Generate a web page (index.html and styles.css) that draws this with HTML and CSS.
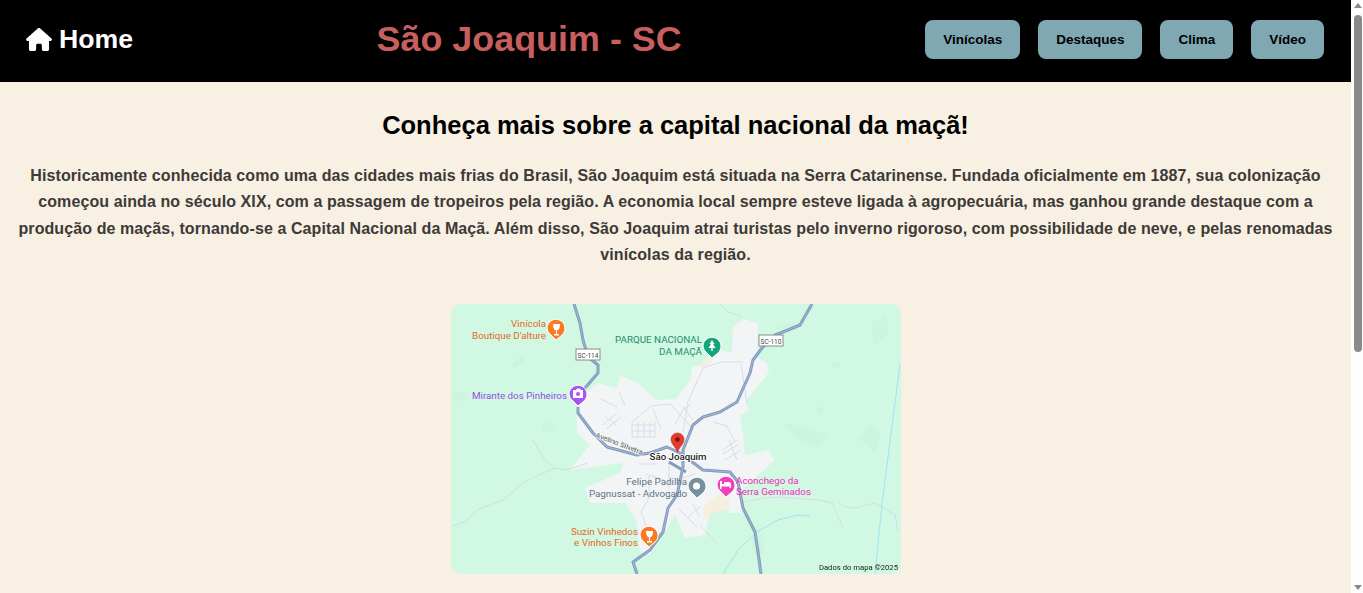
FILE: index.html
```html
<!DOCTYPE html>
<html lang="pt-BR">
<head>
<meta charset="utf-8">
<title>São Joaquim - SC</title>
<link rel="stylesheet" href="styles.css">
</head>
<body>
<div class="page">
<header class="topbar">
  <a class="home" href="#">
    <svg class="home-icon" viewBox="0 0 576 512" aria-hidden="true"><path d="M575.8 255.5c0 18-15 32.1-32 32.1h-32l.7 160.2c0 2.7-.2 5.4-.5 8.1V472c0 22.1-17.9 40-40 40H456c-1.100 0-2.200 0-3.300-.1-1.400.1-2.800.1-4.200.1H416 392c-22.100 0-40-17.900-40-40V448 384c0-17.700-14.300-32-32-32H256c-17.700 0-32 14.300-32 32v64 24c0 22.100-17.900 40-40 40H160 128.100c-1.500 0-3-.1-4.500-.2-1.200.1-2.400.2-3.600.2H104c-22.100 0-40-17.900-40-40V360c0-.9 0-1.900.1-2.800V287.600H32c-18 0-32-14-32-32.100 0-9 3-17 10-24L266.400 8c7-7 15-8 22-8s15 2 21 7L564.800 231.500c8 7 12 15 11 24z"/></svg>
    <span>Home</span>
  </a>
  <h1 class="title">São Joaquim - SC</h1>
  <nav class="nav">
    <a class="nav-btn" href="#">Vinícolas</a>
    <a class="nav-btn" href="#">Destaques</a>
    <a class="nav-btn" href="#">Clima</a>
    <a class="nav-btn" href="#">Vídeo</a>
  </nav>
</header>
<main class="content">
  <h2 class="heading">Conheça mais sobre a capital nacional da maçã!</h2>
  <p class="intro">Historicamente conhecida como uma das cidades mais frias do Brasil, São Joaquim está situada na Serra Catarinense. Fundada oficialmente em 1887, sua colonização começou ainda no século XIX, com a passagem de tropeiros pela região. A economia local sempre esteve ligada à agropecuária, mas ganhou grande destaque com a produção de maçãs, tornando-se a Capital Nacional da Maçã. Além disso, São Joaquim atrai turistas pelo inverno rigoroso, com possibilidade de neve, e pelas renomadas vinícolas da região.</p>
  <svg class="map" viewBox="0 0 450 270" role="img" aria-label="Mapa de São Joaquim">
    <rect class="m-land" width="450" height="270"/>
    <path class="m-tone" d="M0 90l12-3 4 8-14 3zM60 60l10-8 4 4-10 8zM90 122l8-6 6 6-6 6-8-2zM325 20l18 0 1 4-19 1zM420 20l15-10 3 20-15 12zM390 62l-8 2-2-6 10 0zM370 112l-6-6 6-4 4 4zM330 118l35 8 12 6-10 12-22-10zM420 120l-12 15 16 14 6-20zM300 240l6-20 8 20-6 20z"/>
    <path class="m-urban" d="M126 109L132 92L147 79L166 84L169 72L186 78L205 96L225 95L240 75L241 63L251 61L269 46L281 49L282 23L292 15L307 19L306 53L316 59L318 68L296 96L297 108L289 111L292 131L294 151L317 146L324 156L287 189L292 209L279 209L268 190L256 219L254 231L234 234L224 211L212 231L199 251L189 248L186 218L174 199L139 199L134 184L169 169L172 159L119 166L139 141L126 129Z"/>
    <path class="m-sand" d="M252 202L267 191L278 186L279 205L262 209L254 216Z"/>
    <path class="m-sand" d="M249 61L258 52L261 58L253 64Z"/>
    <g class="m-street">
      <path d="M151 121l15-12M155 125l15-12M159 117l-5-5M165 121l-5-5M181 118v16M187 118v16M193 118v16M199 118v16M204 118v16M181 121h23M181 127h23M181 133h23M181 118l19-16 19-2 17 18 6 8M202 105l8 20M240 100l-8 6-8 14M232 103l10 13M272 146l14-10M272 150l16-10M274 156l16-10M278 136l8 20M236 100L252 64L270 58L292 58M290 60L296 100M237 100L232 128M198 172v22l-8 14 8 22M228 205l18 18M236 214l14-12M242 200l6 12M218 155v30M226 176l18-6M262 118l14 4 8 16M150 95l16 8M168 88l6 14M188 160h18M195 170l18 6"/>
    </g>
    <g class="m-river-grey">
      <path d="M82 136L92 154L104 164L116 166L137 159M104 164L92 169L72 179L52 196L26 206L14 218L1 222"/>
      <path d="M292 198L314 194L327 193L367 196L381 199L392 224M387 198L394 203L404 204L424 199L444 211L447 228M269 0L277 8L291 13M249 221L266 239"/>
    </g>
    <g class="m-river">
      <path d="M449 60L440 130L431 200L424 270"/>
      <path d="M272 270L287 246L306 228L327 216L347 211L359 212"/>
    </g>
    <g class="m-road">
      <path d="M123 0L129 19L132 36L137 53L147 61L147 69L134 84L128 92M127 103L127 109L142 129L156 143L186 151L199 149L216 143L229 149"/>
      <path d="M361 0L349 21L337 26L324 31L311 44L302 56L299 69L286 98L269 108L252 113L242 121L232 146L232 163L226 191L217 204L212 228L199 246L182 258L186 270"/>
      <path d="M229 149L252 166L279 168L287 178L292 204L304 228L307 248L310 270"/>
      <path d="M218 158L235 168"/>
    </g>
    <g class="m-road-core">
      <path d="M123 0L129 19L132 36L137 53L147 61L147 69L134 84L128 92M127 103L127 109L142 129L156 143L186 151L199 149L216 143L229 149"/>
      <path d="M361 0L349 21L337 26L324 31L311 44L302 56L299 69L286 98L269 108L252 113L242 121L232 146L232 163L226 191L217 204L212 228L199 246L182 258L186 270"/>
      <path d="M229 149L252 166L279 168L287 178L292 204L304 228L307 248L310 270"/>
    </g>
    <g class="m-shield">
      <rect x="125" y="45" width="24" height="11"/>
      <text x="137" y="53.500">SC-114</text>
      <rect x="308" y="31" width="24" height="11"/>
      <text x="320" y="39.500">SC-110</text>
    </g>
    <g class="m-pin m-orange">
      <path d="M96 24a9 9 0 1 1 15 7l-6 5-5-5a9 9 0 0 1-4-7z"/>
      <path class="m-glyph" d="M102 20h7c0 4-1 6-3 6.500V30h2v1.500h-5V30h2v-3.500c-2-.5-3-2.500-3-6.500z"/>
    </g>
    <g class="m-pin m-green">
      <path d="M252 42a9 9 0 1 1 15 7l-6 5-5-5a9 9 0 0 1-4-7z"/>
      <path class="m-glyph" d="M261 36l2.500 4h-1.500l2.500 4h-2.800v3h-1.400v-3h-2.800l2.500-4h-1.500z"/>
    </g>
    <g class="m-pin m-purple">
      <path d="M118 90a9 9 0 1 1 15 7l-6 5-5-5a9 9 0 0 1-4-7z"/>
      <path class="m-glyph" d="M122 86h3l1-1.500h3l1 1.500h2v8h-10z"/>
      <circle class="m-dot-purple" cx="127" cy="90" r="2"/>
    </g>
    <g class="m-pin m-grey">
      <path d="M237 182a9 9 0 1 1 15 7l-6 5-5-5a9 9 0 0 1-4-7z"/>
      <circle class="m-glyph" cx="245.500" cy="182" r="3.500"/>
    </g>
    <g class="m-pin m-pink">
      <path d="M266 181a9 9 0 1 1 15 7l-6 5-5-5a9 9 0 0 1-4-7z"/>
      <path class="m-glyph" d="M269 177h2v3h2v-2h5c1 0 2 1 2 2v4h-1.500v-1.500h-8V185h-1.500z"/>
    </g>
    <g class="m-pin m-orange">
      <path d="M189 231a9 9 0 1 1 15 7l-6 5-5-5a9 9 0 0 1-4-7z"/>
      <path class="m-glyph" d="M195 227h7c0 4-1 6-3 6.500V237h2v1.500h-5V237h2v-3.500c-2-.5-3-2.500-3-6.500z"/>
    </g>
    <path class="m-red" d="M226.500 129c4 0 6.500 3 6.500 6.500 0 4.500-4.500 7-6.500 13-2-6-6.500-8.500-6.500-13 0-3.500 2.500-6.500 6.500-6.500z"/>
    <circle class="m-reddot" cx="226.500" cy="135.500" r="2.300"/>
    <g class="m-label">
      <text class="m-t-orange" x="95" y="23">Vinícola</text>
      <text class="m-t-orange" x="95" y="35">Boutique D'alture</text>
      <text class="m-t-purple" x="116" y="94.500">Mirante dos Pinheiros</text>
      <text class="m-t-orange" x="187" y="231">Suzin Vinhedos</text>
      <text class="m-t-orange" x="187" y="242">e Vinhos Finos</text>
      <text class="m-t-green" x="251" y="39">PARQUE NACIONAL</text>
      <text class="m-t-green" x="251" y="51">DA MAÇÃ</text>
      <text class="m-t-grey" x="236" y="181">Felipe Padilha</text>
      <text class="m-t-grey" x="236" y="193">Pagnussat - Advogado</text>
    </g>
    <text class="m-t-pink" x="285" y="180">Aconchego da</text>
    <text class="m-t-pink" x="285" y="191">Serra Geminados</text>
    <text class="m-t-city" x="227" y="156">São Joaquim</text>
    <text class="m-t-street" transform="translate(144 133) rotate(21)">Avelino Silveira</text>
    <text class="m-t-credit" x="447" y="266">Dados do mapa ©2025</text>
  </svg>
  <div class="more"></div>
</main>
</div>
<div class="scrollbar" aria-hidden="true">
  <svg class="sb-arrow" viewBox="0 0 8 5"><path d="M4 0L8 5H0z"/></svg>
  <div class="sb-thumb"></div>
  <svg class="sb-arrow sb-arrow-down" viewBox="0 0 8 5"><path d="M0 0H8L4 5z"/></svg>
</div>
</body>
</html>
```
FILE: styles.css
```css
* { box-sizing: border-box; }
html, body { margin: 0; padding: 0; }
html { scrollbar-width: none; }
body {
  font-family: "Liberation Sans", Arial, sans-serif;
  background: #f7f0e3;
  color: #000;
}
.page { margin-right: 12px; }
.topbar {
  display: flex;
  align-items: center;
  justify-content: space-between;
  height: 82px;
  padding: 0 27px 4px 26px;
  background: #000;
}
.home {
  display: flex;
  align-items: center;
  gap: 7px;
  color: #fff;
  font-size: 26.670px;
  font-weight: 700;
  text-decoration: none;
}
.home-icon { width: 26px; height: 23px; fill: #fff; }
.title {
  margin: 0;
  font-size: 35.900px;
  font-weight: 700;
  color: #c75f5f;
}
.nav { display: flex; gap: 18px; }
.nav-btn {
  display: block;
  height: 39px;
  padding: 0 18px;
  border-radius: 8px;
  background: #7fa8b2;
  color: #000;
  font-size: 13.500px;
  font-weight: 700;
  line-height: 39px;
  text-decoration: none;
}
.content {
  display: flex;
  flex-direction: column;
  align-items: center;
  padding: 0 16px;
  text-align: center;
}
.heading {
  margin: 27px 0 0;
  font-size: 25.500px;
  line-height: 32px;
  font-weight: 700;
}
.intro {
  margin: 22px 0 0;
  font-size: 16px;
  letter-spacing: 0.095px;
  line-height: 26.400px;
  font-weight: 700;
  color: #3d3a38;
}
.map {
  display: block;
  flex: none;
  width: 450px;
  height: 270px;
  margin-top: 35px;
  border-radius: 10px;
  filter: blur(0.35px);
  font-family: Roboto, "Liberation Sans", sans-serif;
}
.more { height: 416px; flex: none; }
.scrollbar {
  position: fixed;
  top: 0;
  right: 0;
  bottom: 0;
  width: 12px;
  display: flex;
  flex-direction: column;
  align-items: center;
  background: #fdfdfd;
  padding: 3px 1px 3px 2px;
}
.sb-arrow { display: block; width: 8px; height: 5px; fill: #8a8a8a; flex: none; }
.sb-arrow-down { margin-top: auto; }
.sb-thumb {
  width: 8px;
  height: 337px;
  margin-top: 7px;
  border-radius: 4px;
  background: #8a8a8a;
}
.m-land { fill: #d0f8e3; }
.m-tone { fill: #ccf5e0; }
.m-urban { fill: #f3f4f6; }
.m-sand { fill: #f5efe0; }
.m-street { fill: none; stroke: #d6dce8; stroke-width: 1; }
.m-river-grey { fill: none; stroke: #d5dbe8; stroke-width: 1; }
.m-river { fill: none; stroke: #9fe4f2; stroke-width: 1; }
.m-road { fill: none; stroke: #8199bd; stroke-width: 3; stroke-linejoin: round; }
.m-road-core { fill: none; stroke: #a3b6d2; stroke-width: 1; stroke-linejoin: round; }
.m-shield rect { fill: #fff; stroke: #8a8a8a; stroke-width: 1; }
.m-shield text { fill: #444; font-size: 6.500px; text-anchor: middle; }
.m-pin > path:first-child { stroke: #fff; stroke-width: 1; }
.m-orange > path:first-child { fill: #fb7a24; }
.m-green > path:first-child { fill: #14a67a; }
.m-purple > path:first-child { fill: #a855f0; }
.m-grey > path:first-child { fill: #78909c; }
.m-pink > path:first-child { fill: #f23fc0; }
.m-glyph { fill: #fff; }
.m-dot-purple { fill: #a855f0; }
.m-red { fill: #e53a2e; stroke: #b5281f; stroke-width: 0.500; }
.m-reddot { fill: #7b1410; }
.m-label text { font-size: 9.800px; text-anchor: end; }
.m-t-orange { fill: #e8691c; }
.m-t-purple { fill: #9a4be8; }
.m-t-green { fill: #1f8f70; }
.m-t-grey { fill: #5f7486; }
.m-t-pink { fill: #f02cb8; font-size: 9.800px; }
.m-t-city { fill: #222; font-size: 9.700px; font-weight: 500; text-anchor: middle; stroke: #fff; stroke-width: 2px; paint-order: stroke; }
.m-t-street { fill: #444; font-size: 7.500px; stroke: #fff; stroke-width: 1.500px; paint-order: stroke; }
.m-t-credit { fill: #222; font-size: 7.700px; text-anchor: end; }
```
